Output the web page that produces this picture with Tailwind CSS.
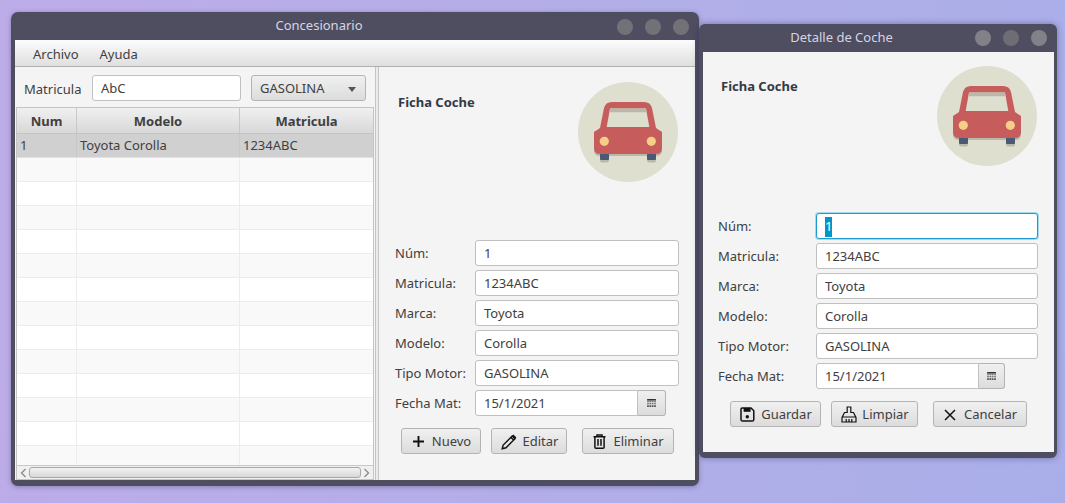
<!DOCTYPE html>
<html lang="en">
<head>
    <meta charset="UTF-8">
    <title>Concesionario</title>
    <script src="https://cdn.jsdelivr.net/npm/@tailwindcss/browser@4"></script>
</head>
<body class="w-[1065px] h-[503px] overflow-hidden relative bg-[linear-gradient(100deg,#bdace8_0%,#b4aee8_50%,#a9aee9_100%)] font-['Noto_Sans',sans-serif] text-[13px] text-[#404040]">

    <svg class="hidden">
        <symbol id="car" viewBox="0 0 100 100">
            <circle cx="50" cy="50" r="50" fill="#dfdfd0"/>
            <path d="M16 50 V68 Q16 74 22 74 V78 Q22 80.5 24 80.5 H29 Q31 80.5 31 78 V74 H69 V78 Q69 80.5 71 80.5 H76 Q78 80.5 78 78 V74 Q84 74 84 68 V50 Z" fill="#b9b9ab"/>
            <rect x="22" y="71" width="9" height="7" rx="1" fill="#4a5a75"/>
            <rect x="69" y="71" width="9" height="7" rx="1" fill="#4a5a75"/>
            <path d="M22 46 L26 26 Q27.5 20 34 20 H66 Q72.5 20 74 26 L78 46 L84 50 V66 Q84 72 78 72 H22 Q16 72 16 66 V50 Z" fill="#c75c5c"/>
            <path d="M28.7 45 L32 26.5 H68 L71.3 45 Z" fill="#dfdfd0"/>
            <path d="M32 26.5 H68 L68.7 30.3 H31.3 Z" fill="#b9b9ab"/>
            <circle cx="26.3" cy="59.3" r="4.6" fill="#f5cf87"/>
            <circle cx="73.3" cy="59.3" r="4.6" fill="#f5cf87"/>
        </symbol>
        <symbol id="cal" viewBox="0 0 11 10">
            <path d="M0 0h11v2h-11z" fill="#333"/>
            <path d="M0 2.7h2.2v1.5h-2.2zM2.9 2.7h2.2v1.5h-2.2zM5.8 2.7h2.2v1.5h-2.2zM8.8 2.7h2.2v1.5h-2.2zM0 5.2h2.2v1.5h-2.2zM2.9 5.2h2.2v1.5h-2.2zM5.8 5.2h2.2v1.5h-2.2zM8.8 5.2h2.2v1.5h-2.2zM0 7.7h2.2v2.3h-2.2zM2.9 7.7h2.2v2.3h-2.2zM5.8 7.7h2.2v2.3h-2.2zM8.8 7.7h2.2v2.3h-2.2z" fill="#555"/>
        </symbol>
    </svg>

    <!-- main window -->
    <div class="absolute left-[11px] top-[12px] w-[688px] h-[474px] rounded-[7px] bg-[#4f4d60] shadow-[0_1px_5px_rgba(40,40,80,0.35)] px-[4px] pb-[6px] flex flex-col">
        <div class="h-[28px] shrink-0 flex items-center relative">
            <div class="w-[608px] text-center text-[#d6d5e6] text-[13px] -mt-[1px]">Concesionario</div>
            <div class="absolute right-[6px] top-[7px] flex gap-[12px]">
                <span class="w-[16px] h-[16px] rounded-full bg-[#727178]"></span>
                <span class="w-[16px] h-[16px] rounded-full bg-[#727178]"></span>
                <span class="w-[16px] h-[16px] rounded-full bg-[#727178]"></span>
            </div>
        </div>
        <div class="flex-1 bg-[#f4f4f4] flex flex-col min-h-0">
            <div class="h-[27px] shrink-0 flex items-center pl-[18px] pt-[4px] gap-[21px] bg-[linear-gradient(#fcfcfc,#dfdfdf)] border-b border-[#b0b0b0]">
                <span>Archivo</span><span>Ayuda</span>
            </div>
            <div class="flex-1 flex min-h-0">
                <!-- left pane -->
                <div class="w-[360px] shrink-0 flex flex-col pl-[1px]">
                    <div class="h-[40px] shrink-0 flex items-start pt-[8px] pl-[8px]">
                        <span class="w-[68px] leading-[28px]">Matricula</span>
                        <div class="w-[149px] h-[26px] bg-white border border-[#c0c0c0] rounded-[3px] flex items-center pl-[8px] pt-[2px]">AbC</div>
                        <div class="ml-[10px] w-[115px] h-[26px] border border-[#b4b4b4] rounded-[3px] bg-[linear-gradient(#f0f0f0,#dcdcdc)] flex items-center justify-between pl-[8px] pr-[9px] pt-[2px]">
                            <span>GASOLINA</span>
                            <span class="w-0 h-0 border-x-[4.5px] border-x-transparent border-t-[5px] border-t-[#555]"></span>
                        </div>
                    </div>
                    <div class="flex-1 min-h-0 border border-[#c4c4c4] mr-[1px] flex flex-col bg-white">
                        <div class="h-[26px] shrink-0 flex font-bold bg-[linear-gradient(#f0f0f0,#d8d8d8)] border-b border-[#c4c4c4] text-center leading-[27px]">
                            <div class="w-[60px] border-r border-[#c8c8c8]">Num</div>
                            <div class="w-[163px] border-r border-[#c8c8c8]">Modelo</div>
                            <div class="flex-1">Matricula</div>
                        </div>
                        <div class="flex-1 min-h-0 overflow-hidden">
                            <div class="h-[24px] flex leading-[22px] bg-[#d0d0d0] border-b border-[#e2e2e2]"><div class="w-[60px] pl-[3px] border-r border-[#c8c8c8]">1</div><div class="w-[163px] pl-[3px] border-r border-[#c8c8c8]">Toyota Corolla</div><div class="flex-1 pl-[3px]">1234ABC</div></div>
                            <div class="h-[24px] flex bg-[#f9f9f9] border-b border-[#ececec]"><div class="w-[60px] border-r border-[#ececec]"></div><div class="w-[163px] border-r border-[#ececec]"></div></div>
                            <div class="h-[24px] flex bg-white border-b border-[#ececec]"><div class="w-[60px] border-r border-[#ececec]"></div><div class="w-[163px] border-r border-[#ececec]"></div></div>
                            <div class="h-[24px] flex bg-[#f9f9f9] border-b border-[#ececec]"><div class="w-[60px] border-r border-[#ececec]"></div><div class="w-[163px] border-r border-[#ececec]"></div></div>
                            <div class="h-[24px] flex bg-white border-b border-[#ececec]"><div class="w-[60px] border-r border-[#ececec]"></div><div class="w-[163px] border-r border-[#ececec]"></div></div>
                            <div class="h-[24px] flex bg-[#f9f9f9] border-b border-[#ececec]"><div class="w-[60px] border-r border-[#ececec]"></div><div class="w-[163px] border-r border-[#ececec]"></div></div>
                            <div class="h-[24px] flex bg-white border-b border-[#ececec]"><div class="w-[60px] border-r border-[#ececec]"></div><div class="w-[163px] border-r border-[#ececec]"></div></div>
                            <div class="h-[24px] flex bg-[#f9f9f9] border-b border-[#ececec]"><div class="w-[60px] border-r border-[#ececec]"></div><div class="w-[163px] border-r border-[#ececec]"></div></div>
                            <div class="h-[24px] flex bg-white border-b border-[#ececec]"><div class="w-[60px] border-r border-[#ececec]"></div><div class="w-[163px] border-r border-[#ececec]"></div></div>
                            <div class="h-[24px] flex bg-[#f9f9f9] border-b border-[#ececec]"><div class="w-[60px] border-r border-[#ececec]"></div><div class="w-[163px] border-r border-[#ececec]"></div></div>
                            <div class="h-[24px] flex bg-white border-b border-[#ececec]"><div class="w-[60px] border-r border-[#ececec]"></div><div class="w-[163px] border-r border-[#ececec]"></div></div>
                            <div class="h-[24px] flex bg-[#f9f9f9] border-b border-[#ececec]"><div class="w-[60px] border-r border-[#ececec]"></div><div class="w-[163px] border-r border-[#ececec]"></div></div>
                            <div class="h-[24px] flex bg-white border-b border-[#ececec]"><div class="w-[60px] border-r border-[#ececec]"></div><div class="w-[163px] border-r border-[#ececec]"></div></div>
                            <div class="h-[24px] flex bg-[#f9f9f9] border-b border-[#ececec]"><div class="w-[60px] border-r border-[#ececec]"></div><div class="w-[163px] border-r border-[#ececec]"></div></div>
                        </div>
                        <div class="h-[14px] shrink-0 bg-[#f0f0f0] border-t border-[#c8c8c8] flex items-center justify-between px-[3px]">
                            <svg width="7" height="10" viewBox="0 0 7 10"><path d="M5.5 1 L1.5 5 L5.5 9" fill="none" stroke="#8a8a8a" stroke-width="1.3"/></svg>
                            <div class="w-[332px] h-[11px] rounded-[3px] border border-[#a8a8a8] bg-[linear-gradient(#f2f2f2,#d8d8d8)]"></div>
                            <svg width="7" height="10" viewBox="0 0 7 10"><path d="M1.5 1 L5.5 5 L1.5 9" fill="none" stroke="#8a8a8a" stroke-width="1.3"/></svg>
                        </div>
                    </div>
                </div>
                <!-- divider -->
                <div class="w-[4px] shrink-0 bg-[#ececec] border-x border-[#c4c4c4]"></div>
                <!-- right pane -->
                <div class="flex-1 pt-[15px] pl-[16px] pr-[16px] relative">
                    <div class="h-[158px] flex justify-between items-start pl-[3px]">
                        <div class="font-bold pt-[11px] text-[#333a45]">Ficha Coche</div>
                        <svg class="w-[100px] h-[100px] mr-[1px]"><use href="#car"/></svg>
                    </div>
                    <div class="flex flex-col gap-[4px]">
                        <div class="flex items-center h-[26px]"><span class="w-[80px] pt-[2px]">Núm:</span><div class="w-[204px] h-[26px] bg-white border border-[#c0c0c0] rounded-[3px] flex items-center pl-[8px] pt-[2px]">1</div></div>
                        <div class="flex items-center h-[26px]"><span class="w-[80px] pt-[2px]">Matricula:</span><div class="w-[204px] h-[26px] bg-white border border-[#c0c0c0] rounded-[3px] flex items-center pl-[8px] pt-[2px]">1234ABC</div></div>
                        <div class="flex items-center h-[26px]"><span class="w-[80px] pt-[2px]">Marca:</span><div class="w-[204px] h-[26px] bg-white border border-[#c0c0c0] rounded-[3px] flex items-center pl-[8px] pt-[2px]">Toyota</div></div>
                        <div class="flex items-center h-[26px]"><span class="w-[80px] pt-[2px]">Modelo:</span><div class="w-[204px] h-[26px] bg-white border border-[#c0c0c0] rounded-[3px] flex items-center pl-[8px] pt-[2px]">Corolla</div></div>
                        <div class="flex items-center h-[26px]"><span class="w-[80px] pt-[2px]">Tipo Motor:</span><div class="w-[204px] h-[26px] bg-white border border-[#c0c0c0] rounded-[3px] flex items-center pl-[8px] pt-[2px]">GASOLINA</div></div>
                        <div class="flex items-center h-[26px]"><span class="w-[80px] pt-[2px]">Fecha Mat:</span>
                            <div class="w-[191px] h-[26px] flex">
                                <div class="flex-1 bg-white border border-[#c0c0c0] rounded-l-[3px] flex items-center pl-[8px] pt-[2px]">15/1/2021</div>
                                <div class="w-[28px] border border-l-0 border-[#b4b4b4] rounded-r-[3px] bg-[linear-gradient(#f0f0f0,#dcdcdc)] flex items-center justify-center"><svg class="w-[9px] h-[8px]"><use href="#cal"/></svg></div>
                            </div>
                        </div>
                    </div>
                    <div class="flex mt-[12px] ml-[6px]">
                        <div class="w-[80px] h-[26px] border border-[#b4b4b4] rounded-[3px] bg-[linear-gradient(#f0f0f0,#dcdcdc)] flex items-center justify-center gap-[7px] pt-[1px] pl-[1px]">
                            <svg width="13" height="13" viewBox="0 0 13 13"><path d="M6.5 1 V12 M1 6.5 H12" stroke="#111" stroke-width="1.9"/></svg><span>Nuevo</span>
                        </div>
                        <div class="ml-[10px] w-[76px] h-[26px] border border-[#b4b4b4] rounded-[3px] bg-[linear-gradient(#f0f0f0,#dcdcdc)] flex items-center justify-center gap-[6px] pt-[1px] pl-[1px]">
                            <svg width="16" height="16" viewBox="0 0 16 16"><path d="M1.2 14.8 L2.2 11 L11.2 2 L14 4.8 L5 13.8 Z M9.9 3.4 L12.6 6.1" fill="none" stroke="#111" stroke-width="1.4"/><path d="M12.4 0.6 L15.4 3.6 L13.8 5.2 L10.8 2.2Z" fill="#111"/></svg><span>Editar</span>
                        </div>
                        <div class="ml-[15px] w-[92px] h-[26px] border border-[#b4b4b4] rounded-[3px] bg-[linear-gradient(#f0f0f0,#dcdcdc)] flex items-center justify-center gap-[7px] pt-[1px] pl-[1px]">
                            <svg width="13" height="15" viewBox="0 0 13 15"><path d="M0.5 2.7 H12.5 M4 2.7 V0.9 H9 V2.7 M1.9 2.7 V13.2 Q1.9 14.2 2.9 14.2 H10.1 Q11.1 14.2 11.1 13.2 V2.7 M5 5 V11.8 M8 5 V11.8" fill="none" stroke="#111" stroke-width="1.5"/></svg><span>Eliminar</span>
                        </div>
                    </div>
                </div>
            </div>
        </div>
    </div>

    <!-- detail window -->
    <div class="absolute left-[699px] top-[24px] w-[358px] h-[434px] rounded-[6px] bg-[#4f4d60] shadow-[0_0_6px_rgba(40,40,90,0.45)] pl-[4px] pr-[3px] pb-[6px] flex flex-col">
        <div class="h-[28px] shrink-0 flex items-center relative">
            <div class="w-[277px] text-center text-[#d6d5e6] -mt-[1px]">Detalle de Coche</div>
            <div class="absolute right-[7px] top-[6px] flex gap-[12px]">
                <span class="w-[16px] h-[16px] rounded-full bg-[#828188]"></span>
                <span class="w-[16px] h-[16px] rounded-full bg-[#6e6d75]"></span>
                <span class="w-[16px] h-[16px] rounded-full bg-[#828188]"></span>
            </div>
        </div>
        <div class="flex-1 bg-[#f4f4f4] pt-[14px] pl-[15px]">
            <div class="h-[147px] flex justify-between items-start pl-[3px] pr-[17px]">
                <div class="font-bold pt-[11px] text-[#333a45]">Ficha Coche</div>
                <svg class="w-[100px] h-[100px]"><use href="#car"/></svg>
            </div>
            <div class="flex flex-col gap-[4px]">
                <div class="flex items-center h-[26px]"><span class="w-[98px] pt-[2px]">Núm:</span><div class="w-[222px] h-[26px] bg-white border border-[#1d9bd1] rounded-[3px] shadow-[0_0_0_1px_#9fdcf2] flex items-center pl-[8px] pt-[2px]"><span class="bg-[#0096c9] text-white">1</span></div></div>
                <div class="flex items-center h-[26px]"><span class="w-[98px] pt-[2px]">Matricula:</span><div class="w-[222px] h-[26px] bg-white border border-[#c0c0c0] rounded-[3px] flex items-center pl-[8px] pt-[2px]">1234ABC</div></div>
                <div class="flex items-center h-[26px]"><span class="w-[98px] pt-[2px]">Marca:</span><div class="w-[222px] h-[26px] bg-white border border-[#c0c0c0] rounded-[3px] flex items-center pl-[8px] pt-[2px]">Toyota</div></div>
                <div class="flex items-center h-[26px]"><span class="w-[98px] pt-[2px]">Modelo:</span><div class="w-[222px] h-[26px] bg-white border border-[#c0c0c0] rounded-[3px] flex items-center pl-[8px] pt-[2px]">Corolla</div></div>
                <div class="flex items-center h-[26px]"><span class="w-[98px] pt-[2px]">Tipo Motor:</span><div class="w-[222px] h-[26px] bg-white border border-[#c0c0c0] rounded-[3px] flex items-center pl-[8px] pt-[2px]">GASOLINA</div></div>
                <div class="flex items-center h-[26px]"><span class="w-[98px] pt-[2px]">Fecha Mat:</span>
                    <div class="w-[189px] h-[26px] flex">
                        <div class="flex-1 bg-white border border-[#c0c0c0] rounded-l-[3px] flex items-center pl-[8px] pt-[2px]">15/1/2021</div>
                        <div class="w-[26px] border border-l-0 border-[#b4b4b4] rounded-r-[3px] bg-[linear-gradient(#f0f0f0,#dcdcdc)] flex items-center justify-center"><svg class="w-[9px] h-[8px]"><use href="#cal"/></svg></div>
                    </div>
                </div>
            </div>
            <div class="flex mt-[12px] ml-[12px]">
                <div class="w-[91px] h-[26px] border border-[#b4b4b4] rounded-[3px] bg-[linear-gradient(#f0f0f0,#dcdcdc)] flex items-center justify-center gap-[6px] pt-[1px] pl-[1px]">
                    <svg width="15" height="15" viewBox="0 0 15 15"><path d="M2.2 1 H11 L13.8 3.8 V12.4 Q13.8 14 12.2 14 H2.6 Q1 14 1 12.4 V2.2 Q1 1 2.2 1Z" fill="none" stroke="#111" stroke-width="1.5"/><path d="M3.6 1 H10.6 V4.8 H3.6Z" fill="#111"/><circle cx="7.3" cy="9.8" r="1.7" fill="#111"/></svg><span>Guardar</span>
                </div>
                <div class="ml-[10px] w-[87px] h-[26px] border border-[#b4b4b4] rounded-[3px] bg-[linear-gradient(#f0f0f0,#dcdcdc)] flex items-center justify-center gap-[5px] pt-[1px] pl-[1px]">
                    <svg width="16" height="17" viewBox="0 0 16 17"><path d="M6.2 1 H9.8 V6.5 H12.5 L15 11.5 V16 H1 V11.5 L3.5 6.5 H6.2 Z M1.5 11 H14.5 M5.2 16 V13 M8 16 V13 M10.8 16 V13" fill="none" stroke="#111" stroke-width="1.2"/></svg><span>Limpiar</span>
                </div>
                <div class="ml-[15px] w-[94px] h-[26px] border border-[#b4b4b4] rounded-[3px] bg-[linear-gradient(#f0f0f0,#dcdcdc)] flex items-center justify-center gap-[8px] pt-[1px] pl-[1px]">
                    <svg width="12" height="12" viewBox="0 0 12 12"><path d="M1 1 L11 11 M11 1 L1 11" stroke="#111" stroke-width="1.5"/></svg><span>Cancelar</span>
                </div>
            </div>
        </div>
    </div>
</body>
</html>
